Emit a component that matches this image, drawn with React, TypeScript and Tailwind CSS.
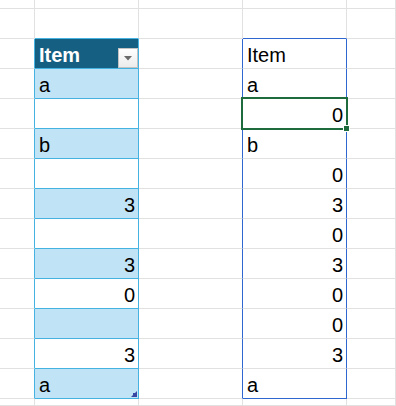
type Val = string | number | null;

// rows 3..13 of the two columns
const tableCol: Val[] = ['a', null, 'b', null, 3, null, 3, 0, null, 3, 'a'];
const plainCol: Val[] = ['a', 0, 'b', 0, 3, 0, 3, 0, 0, 3, 'a'];

const ROWS = 15;
const COLS = 5;

const inTable = (r: number) => r >= 2 && r <= 13;

function rightColor(r: number, c: number) {
    if (c === 0 && inTable(r)) return 'border-r-[#44b3e1]';
    if (c === 1 && inTable(r)) return 'border-r-[#44b3e1]';
    if (c === 2 && inTable(r)) return 'border-r-[#2f66d0]';
    if (c === 3 && inTable(r)) return 'border-r-[#2f66d0]';
    return 'border-r-[#e1e1e1]';
}

function bottomColor(r: number, c: number) {
    if (c === 1 && (r === 1 || inTable(r))) return 'border-b-[#44b3e1]';
    if (c === 3 && (r === 1 || r === 13)) return 'border-b-[#2f66d0]';
    return 'border-b-[#e1e1e1]';
}

const FilterButton = () => (
    <div className="w-[20px] h-[20px] mb-0 flex items-center justify-center border border-[#c3c3c3] bg-gradient-to-b from-white to-[#ececec]">
        <svg width="8" height="5" viewBox="0 0 8 5">
            <polygon points="0,0 8,0 4,4.5" fill="#6a6a6a" />
        </svg>
    </div>
);

const CellText = ({ v }: { v: Val }) => {
    if (v === null) return null;
    const isNum = typeof v === 'number';
    return (
        <span className={`w-full pb-[3px] leading-[20px] text-[20px] text-black ${isNum ? 'text-right pr-[3px]' : 'pl-[4px]'}`}>
            {v}
        </span>
    );
};

const Cell = ({ r, c }: { r: number; c: number }) => {
    const base = `relative flex items-end border-r border-b ${rightColor(r, c)} ${bottomColor(r, c)}`;

    // Excel table in column B
    if (c === 1 && r === 2) {
        return (
            <div className={`${base} bg-[#156082]`}>
                <span className="pl-[4px] pb-[3px] leading-[20px] text-[20px] font-bold text-white">Item</span>
                <div className="ml-auto">
                    <FilterButton />
                </div>
            </div>
        );
    }
    if (c === 1 && r >= 3 && r <= 13) {
        const i = r - 3;
        const banded = i % 2 === 0;
        return (
            <div className={`${base} ${banded ? 'bg-[#c0e4f5]' : 'bg-white'}`}>
                <CellText v={tableCol[i]} />
                {r === 13 && (
                    <svg className="absolute right-[1px] bottom-[1px]" width="6" height="6" viewBox="0 0 6 6">
                        <polygon points="6,0 6,6 0,6" fill="#3b48a3" />
                        <rect x="2" y="2" width="4" height="4" fill="#3b48a3" />
                    </svg>
                )}
            </div>
        );
    }

    // plain range in column D
    if (c === 3 && r === 2) {
        return (
            <div className={base}>
                <CellText v="Item" />
            </div>
        );
    }
    if (c === 3 && r >= 3 && r <= 13) {
        const i = r - 3;
        return (
            <div className={base}>
                <CellText v={plainCol[i]} />
                {r === 4 && (
                    <>
                        <div className="absolute -inset-[2px] border-2 border-[#1e6b3e] z-10" />
                        <div className="absolute -right-[4px] -bottom-[4px] w-[7px] h-[7px] bg-[#1e6b3e] border border-white z-20" />
                    </>
                )}
            </div>
        );
    }

    return <div className={base} />;
};

export default function App() {
    return (
        <div
            className="w-[396px] h-[406px] overflow-hidden bg-white grid grid-cols-[35px_104px_104px_104px_1fr] grid-rows-[9px_repeat(13,30px)_1fr]"
            style={{ fontFamily: '"Liberation Sans", Arial, sans-serif' }}
        >
            {Array.from({ length: ROWS }).map((_, r) =>
                Array.from({ length: COLS }).map((_, c) => <Cell key={`${r}-${c}`} r={r} c={c} />)
            )}
        </div>
    );
}
